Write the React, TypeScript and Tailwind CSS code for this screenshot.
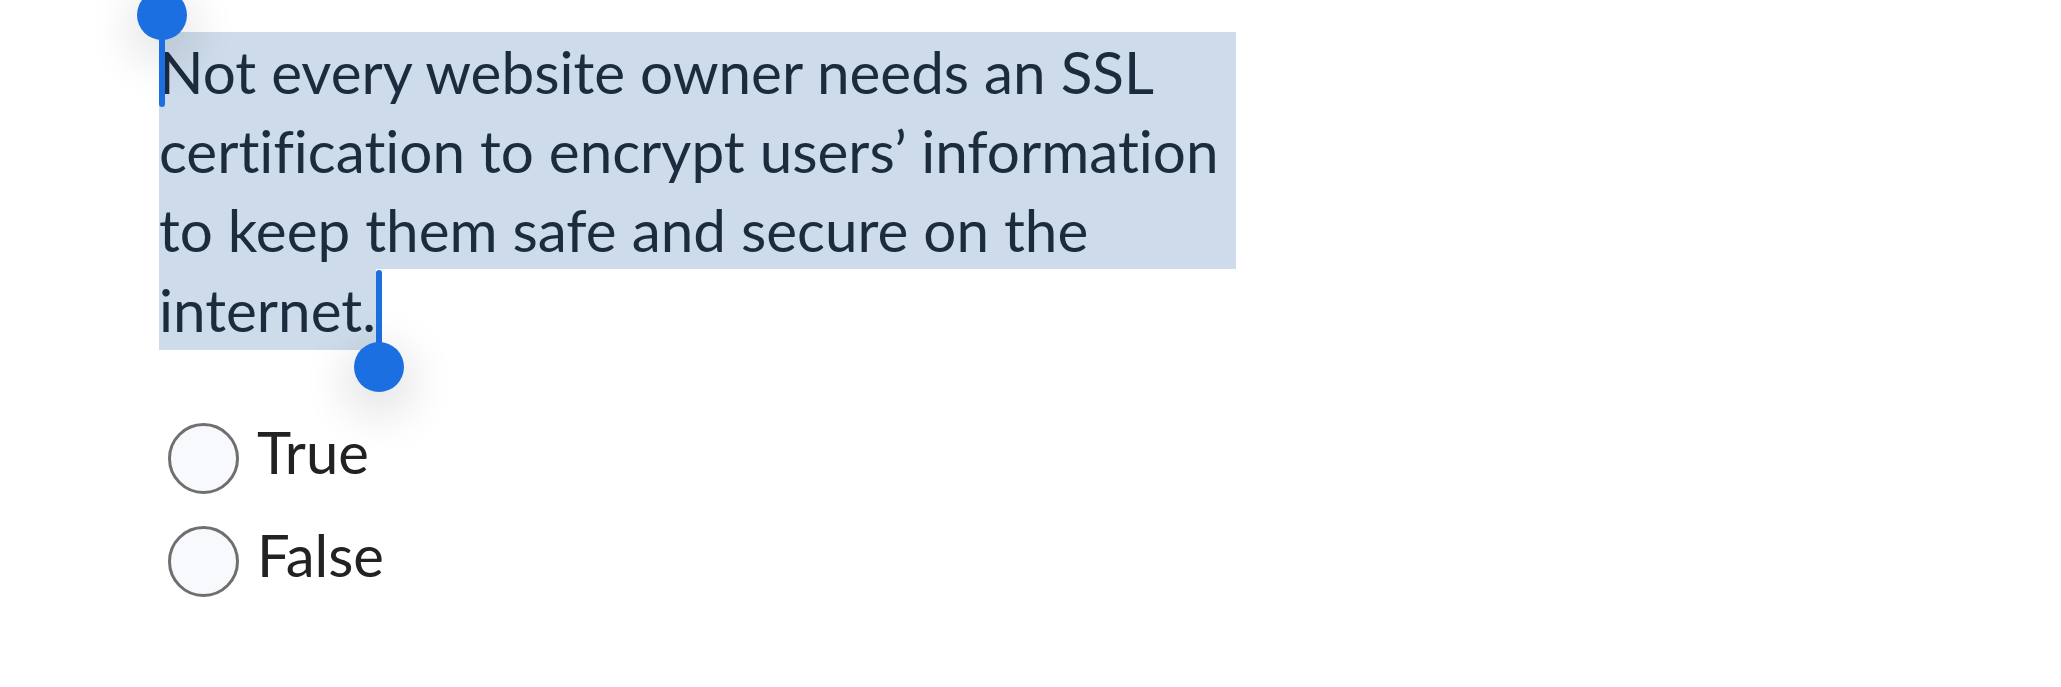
import React from "react";

const HIGHLIGHT = "bg-[#cddbea]";

function StartHandle() {
  return (
    <span className="absolute left-0 top-0 w-0 h-0">
      <span className="absolute left-[-22px] top-[-42px] w-[50px] h-[50px] rounded-full bg-[#1b6fe0] shadow-[0_14px_44px_10px_rgba(0,0,0,0.10)]" />
      <span className="absolute left-0 top-[4px] w-[6px] h-[71px] rounded-b-full bg-[#1b6fe0]" />
    </span>
  );
}

function EndHandle() {
  return (
    <span className="relative inline-block w-0 h-[81px] align-top">
      <span className="absolute left-[0px] top-[1px] w-[6px] h-[78px] rounded-t-full bg-[#1b6fe0]" />
      <span className="absolute left-[-22px] top-[73px] w-[50px] h-[50px] rounded-full bg-[#1b6fe0] shadow-[0_14px_44px_12px_rgba(0,0,0,0.10)]" />
    </span>
  );
}

function Radio({ label }: { label: string }) {
  return (
    <label className="flex items-center h-[80px]">
      <span className="w-[71px] h-[71px] rounded-full border-[3.5px] border-[#6f6f6f] bg-[#f8f9fd]" />
      <span className="ml-[18px] pb-[12px] text-[58px] leading-[80px] text-[#222222]">{label}</span>
    </label>
  );
}

export default function App() {
  return (
    <div className="w-full h-[687px] bg-white overflow-hidden font-[Lato,sans-serif] [font-variant-ligatures:none]">
      <div className="pl-[159px] pt-[32px]">
        <div className="relative w-[1077px] text-[58.4px] text-[#1c2b3e]">
          <div className={`${HIGHLIGHT} leading-[79px]`}>
            <div className="relative">
              <StartHandle />
              Not every website owner needs an SSL
            </div>
            <div>certification to encrypt users’ information</div>
            <div>to keep them safe and secure on the</div>
          </div>
          <div className="leading-[81px] h-[81px]">
            <span className={`${HIGHLIGHT} inline-block align-top h-[81px]`}>internet.</span>
            <EndHandle />
          </div>
        </div>

        <div className="mt-[68px] ml-[9px] flex flex-col gap-[23px]">
          <Radio label="True" />
          <Radio label="False" />
        </div>
      </div>
    </div>
  );
}
